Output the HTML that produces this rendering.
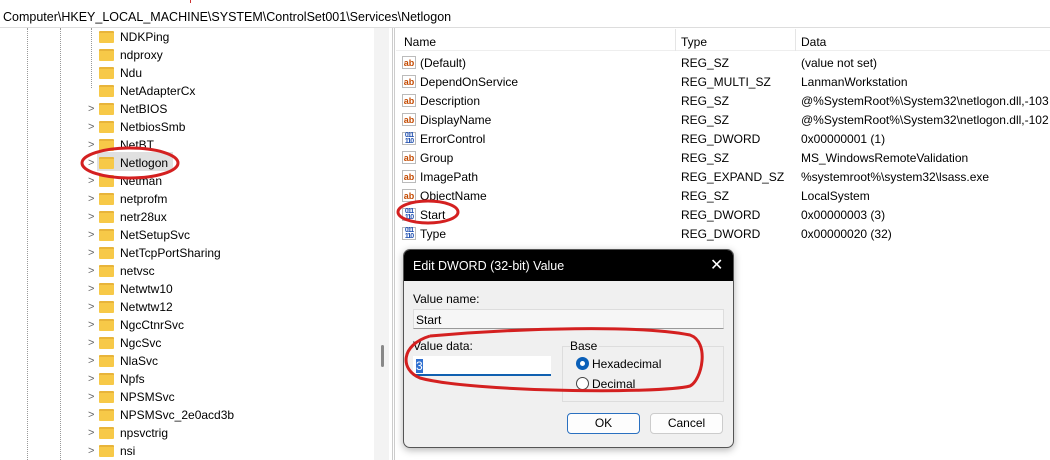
<!DOCTYPE html>
<html><head><style>
*{margin:0;padding:0;box-sizing:border-box}
body{width:1050px;height:460px;background:#fff;font-family:"Liberation Sans",sans-serif;font-size:12px;color:#000;position:relative;overflow:hidden}
.abs{position:absolute;white-space:nowrap}
.addr{left:0;top:0;width:1050px;height:28px;border-bottom:1px solid #ddd}
.tr{position:absolute;left:0;height:18px;width:370px}
.fold{position:absolute;left:99px;top:3px;width:15px;height:12px;background:#f7c948;border-radius:1px;border-top:2px solid #e8b43a}
.chev{position:absolute;left:88px;top:3px;font-size:11px;color:#666}
.tt{position:absolute;left:120px;top:2px;font-size:12px}
.row{position:absolute;left:396px;height:19px;width:654px}
.ic{position:absolute;left:6px;top:3px;width:14px;height:13px;font-size:9px;font-weight:bold;line-height:12px;text-align:center;border:1px solid #bbb}
.ab{color:#c44a00;background:#fff}
.bn{color:#2050b0;font-size:7px;line-height:6px;letter-spacing:-1px}
</style></head><body>
<div class="abs addr"></div>
<div class="abs" style="left:3px;top:10px;font-size:12.5px">Computer\HKEY_LOCAL_MACHINE\SYSTEM\ControlSet001\Services\Netlogon</div>
<div class="abs" style="left:190px;top:0;width:1px;height:3px;background:#c33"></div>
<div class="abs" style="left:27px;top:28px;height:432px;border-left:1px dotted #999"></div>
<div class="abs" style="left:60px;top:28px;height:432px;border-left:1px dotted #999"></div>
<div class="abs" style="left:91px;top:28px;height:60px;border-left:1px dotted #999"></div>
<div class="abs" style="left:374px;top:28px;width:15px;height:432px;background:#f3f3f3"></div>
<div class="abs" style="left:381px;top:345px;width:3px;height:22px;background:#888;border-radius:2px"></div>
<div class="abs" style="left:392px;top:28px;width:3px;height:432px;border-left:1px solid #ccc;border-right:1px solid #ccc"></div>
<div class="abs" style="left:97px;top:152px;width:76px;height:19px;background:#e0e0e0"></div>

<div class="tr" style="top:28px"><div class="fold"></div><div class="tt">NDKPing</div></div>
<div class="tr" style="top:46px"><div class="fold"></div><div class="tt">ndproxy</div></div>
<div class="tr" style="top:64px"><div class="fold"></div><div class="tt">Ndu</div></div>
<div class="tr" style="top:82px"><div class="fold"></div><div class="tt">NetAdapterCx</div></div>
<div class="tr" style="top:100px"><span class="chev">&gt;</span><div class="fold"></div><div class="tt">NetBIOS</div></div>
<div class="tr" style="top:118px"><span class="chev">&gt;</span><div class="fold"></div><div class="tt">NetbiosSmb</div></div>
<div class="tr" style="top:136px"><span class="chev">&gt;</span><div class="fold"></div><div class="tt">NetBT</div></div>
<div class="tr" style="top:154px"><span class="chev">&gt;</span><div class="fold"></div><div class="tt">Netlogon</div></div>
<div class="tr" style="top:172px"><span class="chev">&gt;</span><div class="fold"></div><div class="tt">Netman</div></div>
<div class="tr" style="top:190px"><span class="chev">&gt;</span><div class="fold"></div><div class="tt">netprofm</div></div>
<div class="tr" style="top:208px"><span class="chev">&gt;</span><div class="fold"></div><div class="tt">netr28ux</div></div>
<div class="tr" style="top:226px"><span class="chev">&gt;</span><div class="fold"></div><div class="tt">NetSetupSvc</div></div>
<div class="tr" style="top:244px"><span class="chev">&gt;</span><div class="fold"></div><div class="tt">NetTcpPortSharing</div></div>
<div class="tr" style="top:262px"><span class="chev">&gt;</span><div class="fold"></div><div class="tt">netvsc</div></div>
<div class="tr" style="top:280px"><span class="chev">&gt;</span><div class="fold"></div><div class="tt">Netwtw10</div></div>
<div class="tr" style="top:298px"><span class="chev">&gt;</span><div class="fold"></div><div class="tt">Netwtw12</div></div>
<div class="tr" style="top:316px"><span class="chev">&gt;</span><div class="fold"></div><div class="tt">NgcCtnrSvc</div></div>
<div class="tr" style="top:334px"><span class="chev">&gt;</span><div class="fold"></div><div class="tt">NgcSvc</div></div>
<div class="tr" style="top:352px"><span class="chev">&gt;</span><div class="fold"></div><div class="tt">NlaSvc</div></div>
<div class="tr" style="top:370px"><span class="chev">&gt;</span><div class="fold"></div><div class="tt">Npfs</div></div>
<div class="tr" style="top:388px"><span class="chev">&gt;</span><div class="fold"></div><div class="tt">NPSMSvc</div></div>
<div class="tr" style="top:406px"><span class="chev">&gt;</span><div class="fold"></div><div class="tt">NPSMSvc_2e0acd3b</div></div>
<div class="tr" style="top:424px"><span class="chev">&gt;</span><div class="fold"></div><div class="tt">npsvctrig</div></div>
<div class="tr" style="top:442px"><span class="chev">&gt;</span><div class="fold"></div><div class="tt">nsi</div></div>

<div class="abs" style="left:396px;top:29px;width:654px;height:22px;border-bottom:1px solid #eee"></div>
<div class="abs" style="left:404px;top:35px">Name</div>
<div class="abs" style="left:675px;top:29px;width:1px;height:22px;background:#e5e5e5"></div>
<div class="abs" style="left:681px;top:35px">Type</div>
<div class="abs" style="left:795px;top:29px;width:1px;height:22px;background:#e5e5e5"></div>
<div class="abs" style="left:801px;top:35px">Data</div>

<div class="row" style="top:53px"><div class="ic ab">ab</div><span class="abs" style="left:24px;top:3px">(Default)</span><span class="abs" style="left:285px;top:3px">REG_SZ</span><span class="abs" style="left:405px;top:3px">(value not set)</span></div>
<div class="row" style="top:72px"><div class="ic ab">ab</div><span class="abs" style="left:24px;top:3px">DependOnService</span><span class="abs" style="left:285px;top:3px">REG_MULTI_SZ</span><span class="abs" style="left:405px;top:3px">LanmanWorkstation</span></div>
<div class="row" style="top:91px"><div class="ic ab">ab</div><span class="abs" style="left:24px;top:3px">Description</span><span class="abs" style="left:285px;top:3px">REG_SZ</span><span class="abs" style="left:405px;top:3px">@%SystemRoot%\System32\netlogon.dll,-103</span></div>
<div class="row" style="top:110px"><div class="ic ab">ab</div><span class="abs" style="left:24px;top:3px">DisplayName</span><span class="abs" style="left:285px;top:3px">REG_SZ</span><span class="abs" style="left:405px;top:3px">@%SystemRoot%\System32\netlogon.dll,-102</span></div>
<div class="row" style="top:129px"><div class="ic bn">011<br>110</div><span class="abs" style="left:24px;top:3px">ErrorControl</span><span class="abs" style="left:285px;top:3px">REG_DWORD</span><span class="abs" style="left:405px;top:3px">0x00000001 (1)</span></div>
<div class="row" style="top:148px"><div class="ic ab">ab</div><span class="abs" style="left:24px;top:3px">Group</span><span class="abs" style="left:285px;top:3px">REG_SZ</span><span class="abs" style="left:405px;top:3px">MS_WindowsRemoteValidation</span></div>
<div class="row" style="top:167px"><div class="ic ab">ab</div><span class="abs" style="left:24px;top:3px">ImagePath</span><span class="abs" style="left:285px;top:3px">REG_EXPAND_SZ</span><span class="abs" style="left:405px;top:3px">%systemroot%\system32\lsass.exe</span></div>
<div class="row" style="top:186px"><div class="ic ab">ab</div><span class="abs" style="left:24px;top:3px">ObjectName</span><span class="abs" style="left:285px;top:3px">REG_SZ</span><span class="abs" style="left:405px;top:3px">LocalSystem</span></div>
<div class="row" style="top:205px"><div class="ic bn">011<br>110</div><span class="abs" style="left:24px;top:3px">Start</span><span class="abs" style="left:285px;top:3px">REG_DWORD</span><span class="abs" style="left:405px;top:3px">0x00000003 (3)</span></div>
<div class="row" style="top:224px"><div class="ic bn">011<br>110</div><span class="abs" style="left:24px;top:3px">Type</span><span class="abs" style="left:285px;top:3px">REG_DWORD</span><span class="abs" style="left:405px;top:3px">0x00000020 (32)</span></div>

<!-- dialog -->
<div class="abs" style="left:403px;top:249px;width:331px;height:199px;background:#f0f0f0;border:1px solid #555;border-radius:7px;overflow:hidden;box-shadow:0 2px 8px rgba(0,0,0,.3)">
 <div style="height:31px;background:#000;color:#fff;position:relative"><span class="abs" style="left:9px;top:9px;font-size:12.5px">Edit DWORD (32-bit) Value</span><span class="abs" style="left:306px;top:5px;font-size:16px">✕</span></div>
 <span class="abs" style="left:9px;top:42px">Value name:</span>
 <div class="abs" style="left:9px;top:59px;width:311px;height:20px;background:#f6f6f6;border:1px solid #ddd;border-bottom-color:#999"></div>
 <span class="abs" style="left:12px;top:63px">Start</span>
 <span class="abs" style="left:9px;top:89px">Value data:</span>
 <div class="abs" style="left:9px;top:106px;width:138px;height:20px;background:#fff;border-bottom:2px solid #1060b0"></div>
 <span class="abs" style="left:12px;top:109px;background:#3070d0;color:#fff">3</span>
 <div class="abs" style="left:158px;top:96px;width:162px;height:56px;border:1px solid #ddd"></div>
 <span class="abs" style="left:166px;top:89px;background:#f0f0f0;padding-right:2px">Base</span>
 <div class="abs" style="left:172px;top:107px;width:13px;height:13px;border-radius:50%;background:#0a5fb8"><div style="margin:4px;width:5px;height:5px;border-radius:50%;background:#fff"></div></div>
 <span class="abs" style="left:188px;top:107px">Hexadecimal</span>
 <div class="abs" style="left:172px;top:127px;width:13px;height:13px;border-radius:50%;border:1px solid #444;background:#fff"></div>
 <span class="abs" style="left:188px;top:127px">Decimal</span>
 <div class="abs" style="left:163px;top:163px;width:73px;height:21px;background:#fdfdfd;border:1px solid #2a70c0;border-radius:4px;text-align:center;line-height:19px">OK</div>
 <div class="abs" style="left:246px;top:163px;width:73px;height:21px;background:#fdfdfd;border:1px solid #ccc;border-radius:4px;text-align:center;line-height:19px">Cancel</div>
</div>

<svg class="abs" style="left:0;top:0" width="1050" height="460">
 <g fill="none" stroke="#d42020" stroke-width="3">
  <ellipse cx="130" cy="163" rx="48" ry="15"/>
  <ellipse cx="428" cy="212" rx="30" ry="11"/>
  <path d="M430 336 C520 328 640 325 690 335 C710 342 702 380 690 386 C660 394 470 392 420 378 C400 370 400 345 430 336"/>
 </g>
</svg>
</body></html>
